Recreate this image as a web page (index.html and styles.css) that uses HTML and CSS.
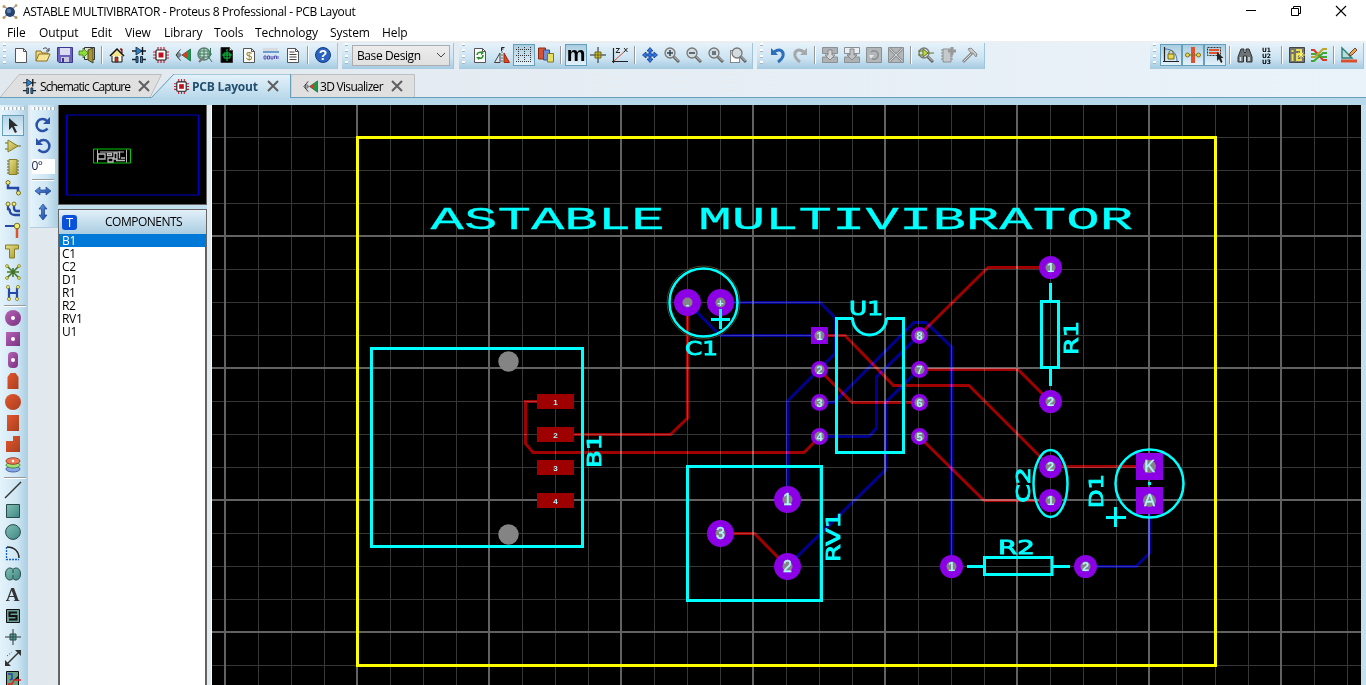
FILE: index.html
```html
<!DOCTYPE html>
<html lang="en">
<head>
<meta charset="utf-8">
<title>ASTABLE MULTIVIBRATOR - Proteus 8 Professional - PCB Layout</title>
<link rel="stylesheet" href="styles.css">
</head>
<body>
<svg class="defs" width="0" height="0">
  <defs>
    <linearGradient id="gold" x2="1" y2="1"><stop stop-color="#e6e08a"/><stop offset="1" stop-color="#a99a2c"/></linearGradient>
    <linearGradient id="violet" x2="1" y2="1"><stop stop-color="#b566b5"/><stop offset="1" stop-color="#7c2f80"/></linearGradient>
    <linearGradient id="rust" x2="1" y2="1"><stop stop-color="#e5572c"/><stop offset="1" stop-color="#a83f20"/></linearGradient>
    <linearGradient id="teal" x2="1" y2="1"><stop stop-color="#7fc0b8"/><stop offset="1" stop-color="#3f8680"/></linearGradient>
    <linearGradient id="blue" x2="1" y2="1"><stop stop-color="#6f9fe4"/><stop offset="1" stop-color="#12409a"/></linearGradient>
    <pattern id="minor" x="225" y="137" width="33" height="33" patternUnits="userSpaceOnUse"><path class="minor" d="M.5 0V33M0 .5H33"/></pattern>
    <symbol id="chip" viewBox="0 0 16 16"><path d="M5 0v16M8 0v16M11 0v16M0 5h16M0 8h16M0 11h16" stroke="#d02030" stroke-width="1.2"/><rect x="3" y="3" width="10" height="10" rx="1" fill="#fff" stroke="#222" stroke-width="1.2"/><rect x="5.500" y="5.500" width="5" height="5" fill="#c01020"/></symbol>
    <symbol id="schem" viewBox="0 0 16 16"><path d="M1 4h14M1 12.500h4M11 12.500h4" stroke="#222" fill="none" stroke-width="1.3"/><path d="M5 0v8l6-4z" fill="#2a86c8" stroke="#123" stroke-width=".8"/><path d="M11.500 0v8" stroke="#111" stroke-width="1.4"/><path d="M5 9.500h2v6H5zM9.500 9.500h2v6h-2z" fill="#2a86c8" stroke="#123" stroke-width=".9"/></symbol>
    <symbol id="vis" viewBox="0 0 16 16"><path d="M5.500 2.500L1 8l4.500 5.500M3 5.500v5" stroke="#333" fill="none"/><path d="M4 5l3 3-3 3z" fill="#789"/><path d="M15.500 2v12L7 8z" fill="#14a04a" stroke="#0a5a2c" stroke-width=".7"/><path d="M10 6l2-1.500v6.500L7 8z" fill="#d83a28"/></symbol>
    <symbol id="lens" viewBox="0 0 16 16"><path d="M9.500 9.500L15 15" stroke="#666" stroke-width="3"/><path d="M9.500 9L14.500 14" stroke="#ccc" stroke-width="1"/><circle cx="6" cy="6" r="5" fill="#d3dde0" stroke="#777" stroke-width="1.3"/></symbol>
    <symbol id="page" viewBox="0 0 16 16"><path d="M2.500 1.500h8l3 3v11h-11z" fill="#fcfcfc" stroke="#555"/><path d="M10.500 1.500v3h3" fill="none" stroke="#555"/></symbol>
    <symbol id="x" viewBox="0 0 12 12"><path d="M1 1l10 10M11 1L1 11" stroke="#5f5f5f" stroke-width="2"/></symbol>
    <symbol id="layer" viewBox="0 0 16 16"><path d="M.5.500h15v6H.5zM.5 10h15v5.500H.5z" fill="#aeb2b4" stroke="#8c9092"/><path d="M6 3h4v5h3l-5 5-5-5h3z" fill="#d4d6d7" stroke="#85898b"/></symbol>
  </defs>
</svg>

<header class="titlebar">
  <svg class="logo" viewBox="0 0 16 16"><path d="M1 2l5 3M15 1l-5 4M1 14l5-4M15 14l-5-3" stroke="#999" stroke-width="1.2"/><circle cx="8" cy="8" r="5" fill="#27426f"/><circle cx="7" cy="7" r="2.300" fill="#5b7fae"/><g fill="#b79b60"><circle cx="2" cy="2.500" r="1.500"/><circle cx="14" cy="1.500" r="1.300"/><circle cx="2" cy="13.500" r="1.500"/><circle cx="14" cy="13.500" r="1.500"/></g></svg>
  <span class="title">ASTABLE MULTIVIBRATOR - Proteus 8 Professional - PCB Layout</span>
  <span class="winbtns">
    <svg viewBox="0 0 12 12"><path d="M1 5.500h10" stroke="#000"/></svg>
    <svg viewBox="0 0 12 12"><path d="M1.500 3.500h7v7h-7zM3.500 3V1.500h7v7H9" fill="none" stroke="#000"/></svg>
    <svg viewBox="0 0 12 12"><path d="M1 1l10 10M11 1L1 11" stroke="#000" stroke-width="1.100"/></svg>
  </span>
</header>

<nav class="menu"><span>File</span><span>Output</span><span>Edit</span><span>View</span><span>Library</span><span>Tools</span><span>Technology</span><span>System</span><span>Help</span></nav>

<div class="toolbars">
  <div class="bar bar-file">
    <i class="grip"></i>
    <b><svg><use href="#page"/></svg></b>
    <b><svg viewBox="0 0 16 16"><path d="M1 14V4h5l1 2h6v2" fill="#f0d67c" stroke="#8a7020"/><path d="M1 14l3-7h11l-3 7z" fill="#f7e596" stroke="#8a7020"/><path d="M8 2c2-2 4-1 5 1M14 1v3h-3" fill="none" stroke="#333"/></svg></b>
    <b><svg viewBox="0 0 16 16"><path d="M.5.500h15v15H2l-1.500-1.500z" fill="#6b62c0" stroke="#3d3690"/><path d="M3 1h10v7H3z" fill="#dcdcf0"/><path d="M4 10h8v5H4z" fill="#c9c9d8"/><path d="M5 11h2v4H5z" fill="#3d3690"/></svg></b>
    <b><svg viewBox="0 0 16 16"><path d="M5.500.500h10v12h-10z" fill="#dfe3c8" stroke="#333"/><path d="M9 3l5-2v15l-5-3z" fill="#a99630" stroke="#443"/><path d="M0 4h4V1l5 5-5 5V8H0z" fill="#8edb3a" stroke="#3a7a18" stroke-width=".8"/></svg></b>
    <u></u>
    <b><svg viewBox="0 0 16 16"><path d="M11 2h2v4" fill="#d33" stroke="#600"/><path d="M3 8v7h10V8" fill="#fffbe0" stroke="#111"/><path d="M1 9l7-7 7 7" fill="#f4e58c" stroke="#111" stroke-width="1.500"/><path d="M6 10h3v5H6z" fill="#c33" stroke="#222" stroke-width=".7"/></svg></b>
    <b><svg><use href="#schem"/></svg></b>
    <b><svg><use href="#chip"/></svg></b>
    <b><svg><use href="#vis"/></svg></b>
    <b><svg viewBox="0 0 16 16"><circle cx="7" cy="7" r="6" fill="#c8dcd4" stroke="#5a8070" stroke-width="1.500"/><path d="M1 7h14M7 1v12M3 4h8v6H3zM11 9l4 6M13.500 1v8" stroke="#3c7a60" fill="none"/><path d="M2 15l5-5" stroke="#777" stroke-width="2"/></svg></b>
    <b><svg viewBox="0 0 16 16"><path d="M2 .5h8.500l3 3v12H2z" fill="#000" stroke="#333"/><path d="M5 6h6v5H5zM8 2v12M3 8h10" fill="none" stroke="#11cc44"/><path d="M10.500.500v3h3" fill="#fff" stroke="#333" stroke-width=".7"/></svg></b>
    <b><svg viewBox="0 0 16 16"><use href="#page"/><text x="8" y="13" class="dollar">$</text></svg></b>
    <b><svg viewBox="0 0 16 16"><path d="M0 1h15v4H0z" fill="#d8dce0"/><path d="M0 5h16" stroke="#4d86c4" stroke-width="1.500"/><path d="M1 9h2v3H1zM4.500 9h2v3h-2zM8 9v3h2V9M11.500 12V9h2v3M15 9v3" fill="none" stroke="#5a52b4"/></svg></b>
    <b><svg viewBox="0 0 16 16"><use href="#page"/><path d="M4.500 5h5M4.500 7.500h7M4.500 10h7M4.500 12.500h7" stroke="#444"/></svg></b>
    <u></u>
    <b><svg viewBox="0 0 16 16"><circle cx="8" cy="8" r="7.500" fill="#2b62c0" stroke="#173c86"/><text x="8" y="13" class="q">?</text></svg></b>
  </div>
  <div class="bar bar-select">
    <i class="grip"></i>
    <div class="combo"><span>Base Design</span><svg viewBox="0 0 10 10"><path d="M1 3l4 4 4-4" fill="none" stroke="#444"/></svg></div>
  </div>
  <div class="bar bar-view">
    <i class="grip"></i>
    <b><svg viewBox="0 0 16 16"><use href="#page"/><path d="M5 8c0-3 4-3 5-2M11 8c0 4-4 4-5 2" fill="none" stroke="#289028" stroke-width="1.500"/><path d="M9 4l3 2-3 2zM7 13l-3-3h4z" fill="#289028"/></svg></b>
    <b><svg viewBox="0 0 16 16"><path d="M.5 15.500h5.500V6z" fill="#dfe7ec" stroke="#444"/><path d="M10 6v9.500h5.500z" fill="#d94a26" stroke="#a02808"/><path d="M8 4v12" stroke="#666" stroke-dasharray="2 1"/><path d="M7.500 4V.5h3M7 2h2.500" fill="none" stroke="#222"/></svg></b>
    <b class="on"><svg viewBox="0 0 16 16"><path d="M2.500 0v16M8.500 0v16M14.500 0v16M0 2.500h16M0 8.500h16M0 14.500h16" stroke="#333" stroke-dasharray="1 1"/></svg></b>
    <b><svg viewBox="0 0 16 16"><path d="M.5 1h7v11h-7z" fill="#d65434" stroke="#8a2b14"/><path d="M5.500 3h6v10h-6z" fill="#6d8fd8" stroke="#34508f"/><path d="M9.500 6.500h6V15h-6z" fill="#e8df68" stroke="#7f7620"/></svg></b>
    <u></u>
    <b class="on"><svg viewBox="0 0 16 16"><text x="8" y="14" class="m">m</text></svg></b>
    <b><svg viewBox="0 0 16 16"><path d="M8 0v16M0 8h16" stroke="#222"/><path d="M5 5h6v6H5z" fill="#c8bd38" stroke="#6d6516"/><path d="M8 5v6M5 8h6" stroke="#6d6516"/></svg></b>
    <b><svg viewBox="0 0 16 16"><path d="M1.500 1v15M0 14.500h16" stroke="#222" stroke-width="1.200"/><path d="M2 14L13 4" stroke="#d84a28"/><path d="M4 1.500h3.500l-3.500 4h4M12 1l3.500 4M15.500 1L12 5" fill="none" stroke="#222"/></svg></b>
    <u></u>
    <b><svg viewBox="0 0 16 16"><path d="M8 .5l3 3.500H9v3h3V5l3.500 3-3.500 3V9H9v3h2l-3 3.500L5 12h2V9H4v2L.5 8 4 5v2h3V4H5z" fill="#2f78e0" stroke="#12398a" stroke-width=".8"/></svg></b>
    <b><svg viewBox="0 0 16 16"><use href="#lens"/><path d="M3 6h6M6 3v6" stroke="#345" stroke-width="1.500"/></svg></b>
    <b><svg viewBox="0 0 16 16"><use href="#lens"/><path d="M3 6h6" stroke="#345" stroke-width="1.500"/></svg></b>
    <b><svg viewBox="0 0 16 16"><use href="#lens"/><path d="M4 4h4v4H4z" fill="#678"/></svg></b>
    <b><svg viewBox="0 0 16 16"><path d="M.5 3.500h9v12h-9z" fill="#fff" stroke="#222" stroke-dasharray="1 1"/><use href="#lens" x="1"/></svg></b>
  </div>
  <div class="bar bar-edit">
    <i class="grip"></i>
    <b><svg viewBox="0 0 16 16"><path d="M4 5c6-4 10-1 9 4-.5 2-2 4-5 6" fill="none" stroke="#2d6fb8" stroke-width="3"/><path d="M1 1v7h7z" fill="#2d6fb8"/></svg></b>
    <b><svg viewBox="0 0 16 16"><path d="M12 5C6 1 2 4 3 9c.5 2 2 4 5 6" fill="none" stroke="#a5a8aa" stroke-width="3"/><path d="M15 1v7H8z" fill="#a5a8aa"/></svg></b>
    <u></u>
    <b><svg><use href="#layer"/></svg></b>
    <b><svg viewBox="0 0 16 16"><use href="#layer"/><path d="M1 1h14v5H1z" fill="#e8eef2"/><path d="M6 2h4v6h3l-5 5-5-5h3z" fill="#c0c3c5" stroke="#85898b"/></svg></b>
    <b><svg viewBox="0 0 16 16"><path d="M.5.500h15v15H.5z" fill="#b4b7b9" stroke="#8c9092"/><path d="M5 5c4-3 8 0 7 4s-5 4-7 2" fill="none" stroke="#8c9092" stroke-width="1.500"/><path d="M3 8h5l-3 4z" fill="#e3e5e6"/></svg></b>
    <b><svg viewBox="0 0 16 16"><path d="M.5.500h15v15H.5z" fill="#b4b7b9" stroke="#8c9092"/><path d="M2 2l12 12M14 2L2 14" stroke="#8c9092" stroke-width="2.500"/><path d="M2 2l12 12M14 2L2 14" stroke="#d3d5d6"/></svg></b>
    <u></u>
    <b><svg viewBox="0 0 16 16"><use href="#lens"/><path d="M5 2v8l5-4zM0 4h5M0 8h5M10 6h6" fill="#c8d84a" stroke="#5b7822"/></svg></b>
    <b><svg viewBox="0 0 16 16"><path d="M3 2h8v13H3z" fill="#c6c9cb" stroke="#8c9092"/><path d="M1 3h2M1 6h2M1 9h2M1 12h2M11 9h2M11 12h2" stroke="#888"/><path d="M12 0v8M8 4h8" stroke="#999" stroke-width="3"/></svg></b>
    <b><svg viewBox="0 0 16 16"><path d="M1 15l9-9" stroke="#888" stroke-width="3"/><path d="M1.500 14.500l8-8" stroke="#ddd"/><path d="M6 2l3-1 6 6-1 3-3-4-2 0z" fill="#ccc" stroke="#888"/></svg></b>
  </div>
  <div class="bar bar-right">
    <i class="grip"></i>
    <b class="on"><svg viewBox="0 0 16 16"><path d="M1.500 0v15M0 14.500h16" stroke="#222" stroke-width="1.200"/><path d="M2 2c8 0 12 5 12 12" fill="none" stroke="#4872b0"/><path d="M6 7V5c1-2 3-2 4 0v2" fill="none" stroke="#7b6b18"/><path d="M5 7h6v5H5z" fill="#e8d850" stroke="#7b6b18"/></svg></b>
    <b class="on"><svg viewBox="0 0 16 16"><path d="M6 0h4v16H6z" fill="#e0522c"/><path d="M2 8h12" stroke="#7b7020"/><circle cx="2.500" cy="8" r="2" fill="#e8d850" stroke="#7b7020"/><circle cx="13.500" cy="8" r="2" fill="#e8d850" stroke="#7b7020"/></svg></b>
    <b class="on"><svg viewBox="0 0 16 16"><path d="M.5.500h13v8H.5z" fill="none" stroke="#333" stroke-dasharray="2 1"/><path d="M2 3h10M2 6h10" stroke="#e0522c" stroke-width="2"/><path d="M10 5v9l2-2 2 4 1.500-1-1.500-4h2.500z" fill="#222"/></svg></b>
    <u></u>
    <b><svg viewBox="0 0 16 16"><path d="M4 2h3v3l1 1 1-1V2h3l3 8v5H9.500V9h-3v6H1v-5z" fill="#6d7478" stroke="#333"/><path d="M3.500 10v4M12 10v4" stroke="#e0e4e6" stroke-width="1.500"/></svg></b>
    <b><svg viewBox="0 0 16 16"><text x="3" y="4.500" class="uu">U1</text><text x="3" y="10.500" class="uu">U2</text><text x="3" y="16.500" class="uu">U3</text></svg></b>
    <u></u>
    <b><svg viewBox="0 0 16 16"><path d="M.5.500h15v15H.5z" fill="#74756a" stroke="#444"/><path d="M3.500 3v2M3.500 7v7M7 3h5v4H8v6h5" fill="none" stroke="#e8df58" stroke-width="2"/><path d="M12 4v8M8 8h8M9.500 5.500l5 5M14.500 5.500l-5 5" stroke="#fff36a"/></svg></b>
    <b><svg viewBox="0 0 16 16"><path d="M0 3h3l9 10h4" fill="none" stroke="#d8392b" stroke-width="2.200"/><path d="M0 7h4l8 3h4M0 14h3L12 6h4" fill="none" stroke="#3ea832" stroke-width="2"/><path d="M0 10h4l8-8h4" fill="none" stroke="#b9a62c" stroke-width="2"/></svg></b>
    <u></u>
    <b><svg viewBox="0 0 16 16"><path d="M1 1v10h10z" fill="#b9ded8" stroke="#2f7f78" stroke-width="1.400"/><path d="M8 9l1-3 5-5 2 2-5 5z" fill="#e8a848" stroke="#744"/><path d="M0 12.500h16v3H0z" fill="#d9512c"/></svg></b>
  </div>
</div>

<div class="tabs">
  <svg class="tabshapes" viewBox="0 0 1366 31" width="1366" height="31"><path d="M0 23.500L19 .5H161.500L150 23.500z" fill="#e0e0e0" stroke="#bcbfc2"/><path d="M291 .5h123.500v23H291z" fill="#e0e0e0" stroke="#bcbfc2"/><path d="M0 23.500H151.500L174 -.5H290.500V23.500H1366V31H0z" fill="#b7d8ea"/><path d="M152 24L174.500 0H290V25H152z" fill="url(#tabfill)"/><path d="M0 23.500H151.500L174 0H290.500V23.500H1366" fill="none" stroke="#679fbb"/><defs><linearGradient id="tabfill" x2="0" y2="1"><stop stop-color="#e6f2fa"/><stop offset="1" stop-color="#b7d8ea"/></linearGradient></defs></svg>
  <div class="tab tab-a"><svg class="ti"><use href="#schem"/></svg><span>Schematic Capture</span><svg class="tx"><use href="#x"/></svg></div>
  <div class="tab tab-b"><svg class="ti"><use href="#chip"/></svg><span>PCB Layout</span><svg class="tx"><use href="#x"/></svg></div>
  <div class="tab tab-c"><svg class="ti"><use href="#vis"/></svg><span>3D Visualizer</span><svg class="tx"><use href="#x"/></svg></div>
</div>

<main class="work">
  <div class="tools">
    <i class="hgrip"></i>
    <b class="on"><svg viewBox="0 0 16 16"><path d="M4 1v12l3-3 3 6 2-1-3-6h4z" fill="#2c2c2c"/></svg></b>
    <b><svg viewBox="0 0 16 16"><path d="M0 5h3M0 11h3M12 8h4" stroke="#6d6820"/><path d="M3 2v12l10-6z" fill="url(#gold)" stroke="#857d28"/></svg></b>
    <b><svg viewBox="0 0 16 16"><path d="M2 2h12M2 5h12M2 8h12M2 11h12M2 14h12" stroke="#555"/><path d="M4 .5h8v15H4z" fill="url(#gold)" stroke="#857d28"/></svg></b>
    <b><svg viewBox="0 0 16 16"><path d="M3 3v5h10v5" fill="none" stroke="#2548a4" stroke-width="2.500"/><circle cx="3" cy="2.500" r="2" fill="#f3ec70" stroke="#77702a"/><circle cx="13.500" cy="13" r="2" fill="#f3ec70" stroke="#77702a"/></svg></b>
    <b><svg viewBox="0 0 16 16"><path d="M3 3v5q2 0 2 3 1 3 5 3h5M9 3v4q0 3 3 3h3" fill="none" stroke="#2548a4" stroke-width="2.300"/><circle cx="3" cy="3" r="2" fill="#f3ec70" stroke="#77702a"/><circle cx="9" cy="3" r="2" fill="#f3ec70" stroke="#77702a"/></svg></b>
    <b><svg viewBox="0 0 16 16"><path d="M0 4h10" stroke="#2548a4" stroke-width="2"/><path d="M12 6v10" stroke="#e0522c" stroke-width="2.500"/><circle cx="12" cy="4" r="2.800" fill="#f3ec70" stroke="#77702a"/></svg></b>
    <b><svg viewBox="0 0 16 16"><path d="M.5 2h13v4h-4v9h-5V6h-4z" fill="url(#gold)" stroke="#857d28"/></svg></b>
    <b><svg viewBox="0 0 16 16"><path d="M2 2l12 12M14 2L2 14M8 4v9M2 8h12" stroke="#457428" stroke-width="1.600"/><g fill="#e8df48" stroke="#77702a" stroke-width=".6"><circle cx="2" cy="2" r="1.500"/><circle cx="14" cy="2" r="1.500"/><circle cx="2" cy="14" r="1.500"/><circle cx="14" cy="14" r="1.500"/></g></svg></b>
    <b><svg viewBox="0 0 16 16"><path d="M4 3v10M12 3v10M4 8h8" fill="none" stroke="#2548a4" stroke-width="2.200"/><g fill="#f3ec70" stroke="#77702a" stroke-width=".7"><circle cx="3" cy="2" r="1.600"/><circle cx="13" cy="2" r="1.600"/><circle cx="4" cy="14" r="1.600"/><circle cx="12" cy="14" r="1.600"/></g></svg></b>
    <u></u>
    <b><svg viewBox="0 0 16 16"><circle cx="8" cy="8" r="8" fill="url(#violet)"/><circle cx="8" cy="8" r="2" fill="#fff"/></svg></b>
    <b><svg viewBox="0 0 16 16"><path d="M1 1h14v14H1z" fill="url(#violet)"/><circle cx="8" cy="8" r="2" fill="#fff"/></svg></b>
    <b><svg viewBox="0 0 16 16"><rect x="3" width="10" height="16" rx="4" fill="url(#violet)"/><circle cx="8" cy="8" r="2" fill="#fff"/></svg></b>
    <b><svg viewBox="0 0 16 16"><path d="M2.500 16V4l3-4h5l3 4v12z" fill="url(#rust)"/></svg></b>
    <b><svg viewBox="0 0 16 16"><circle cx="8" cy="8" r="8" fill="url(#rust)"/></svg></b>
    <b><svg viewBox="0 0 16 16"><path d="M2 0h12v16H2z" fill="url(#rust)"/></svg></b>
    <b><svg viewBox="0 0 16 16"><path d="M1 16V5h7V0h7v16z" fill="url(#rust)"/></svg></b>
    <b><svg viewBox="0 0 16 16"><g stroke-width=".8"><ellipse cx="8" cy="12" rx="7" ry="3" fill="#88a8ea" stroke="#2c4c90"/><ellipse cx="8" cy="8" rx="7" ry="3" fill="#9ee078" stroke="#3d7c28"/><ellipse cx="8" cy="4" rx="7" ry="3.300" fill="#f07a58" stroke="#8a2b14"/></g><circle cx="8" cy="4" r="1.200" fill="#fff"/></svg></b>
    <u></u>
    <b><svg viewBox="0 0 16 16"><path d="M0 16L16 0" stroke="#333" stroke-width="1.500"/></svg></b>
    <b><svg viewBox="0 0 16 16"><path d="M1.500 1.500h13v13h-13z" fill="url(#teal)" stroke="#2a4a48"/></svg></b>
    <b><svg viewBox="0 0 16 16"><circle cx="8" cy="8" r="7.400" fill="url(#teal)" stroke="#2a4a48"/></svg></b>
    <b><svg viewBox="0 0 16 16"><path d="M1.500 2v12.500H14" fill="none" stroke="#1560c8" stroke-dasharray="2 1" stroke-width="1.300"/><path d="M2 2c8 0 12 5 12 11" fill="none" stroke="#222" stroke-width="1.300"/></svg></b>
    <b><svg viewBox="0 0 16 16"><path d="M8 3.500C10.500.500 15.500 2 15.500 8S10.500 15.500 8 12.500C5.500 15.500.5 14 .5 8S5.500.500 8 3.500z" fill="url(#teal)" stroke="#2a4a48"/><path d="M8 4v3M8 9v3" stroke="#2a4a48"/></svg></b>
    <b><svg viewBox="0 0 16 16"><text x="7.500" y="14" class="serif-a">A</text></svg></b>
    <b><svg viewBox="0 0 16 16"><path d="M1.500 1.500h13v13h-13z" fill="#68a096" stroke="#111"/><path d="M12 4.500H4.500V8h7v3.500H4" fill="none" stroke="#111" stroke-width="2"/></svg></b>
    <b><svg viewBox="0 0 16 16"><path d="M8 0v16M0 8h16" stroke="#333"/><path d="M5 5h6v6H5z" fill="#5b9f9a" stroke="#2a4a48"/><path d="M8 5v6M5 8h6" stroke="#2a4a48"/></svg></b>
    <b><svg viewBox="0 0 16 16"><path d="M2 14L14 2" stroke="#333" stroke-width="1.500"/><path d="M0 10v6h6zM10 0h6v6z" fill="#333"/><path d="M2 6l5-4" stroke="#333" stroke-dasharray="1 2"/></svg></b>
    <b><svg viewBox="0 0 16 16"><path d="M1.500.500h12v16h-12z" fill="#68a07c" stroke="#111"/><path d="M3 3h4v5l-2 1" fill="none" stroke="#1c44b0" stroke-width="1.500"/><path d="M3 13h4l2-4h7" fill="none" stroke="#e02020" stroke-width="1.500"/><path d="M9 9l5-5v3" fill="#111"/></svg></b>
  </div>
  <div class="rotate">
    <i class="hgrip"></i>
    <b><svg viewBox="0 0 16 16"><path d="M12.500 11.500A6 6 0 1 1 12 4" fill="none" stroke="#2a52a8" stroke-width="2.500"/><path d="M15 0v7H8z" fill="#2a52a8"/></svg></b>
    <b><svg viewBox="0 0 16 16"><path d="M3.500 11.500A6 6 0 1 0 4 4" fill="none" stroke="#2a52a8" stroke-width="2.500"/><path d="M1 0v7h7z" fill="#2a52a8"/></svg></b>
    <div class="angle">0°</div>
    <u></u>
    <b><svg viewBox="0 0 16 16"><path d="M0 8l5-4v3h6V4l5 4-5 4V9.500H5V12z" fill="url(#blue)" stroke="#1d4292" stroke-width=".7"/></svg></b>
    <b><svg viewBox="0 0 16 16"><path d="M8 0l4 5H9.500v6H12l-4 5-4-5h2.500V5H4z" fill="url(#blue)" stroke="#1d4292" stroke-width=".7"/></svg></b>
  </div>
  <aside class="side">
    <svg class="preview" viewBox="59 105 147 98" width="147" height="98">
      <path d="M66.500 114.500h132v80h-132z" fill="none" stroke="#0000c8"/>
      <path d="M93.500 148.500h37v14h-37z" fill="none" stroke="#00c800"/>
      <path d="M97.500 149v13M126.500 149v13M100 151.500h24" stroke="#bbb" fill="none"/><path d="M98 153.500h7v5h-7zM107.500 153h4v2h-4zM108 157.500h5v4h-5zM114 152.500h3v6h-3zM119.500 151v7M116 160h9M121 157.500h4" fill="none" stroke="#bbb" stroke-width="1.300"/>
    </svg>
    <div class="list">
      <div class="list-head"><em>T</em><span>COMPONENTS</span></div>
      <ul><li class="sel">B1</li><li>C1</li><li>C2</li><li>D1</li><li>R1</li><li>R2</li><li>RV1</li><li>U1</li></ul>
    </div>
  </aside>
  <section class="canvas">
    <svg viewBox="212 105 1149 580" width="1149" height="580">
      <rect x="212" y="105" width="1149" height="580" fill="#000"/>
      <rect x="212" y="105" width="1149" height="580" fill="url(#minor)"/>
      <path class="major" d="M225 105V685M357 105V685M489 105V685M621 105V685M753 105V685M885 105V685M1017 105V685M1149 105V685M1281 105V685M212 236H1361M212 368H1361M212 500H1361M212 632H1361"/>
      <g class="back">
        <path d="M687.500 302.500L720 335.500H819M720 302.500H820L835.500 318V353L787.500 401V500M819 402.500H834L914 322.500H926L951.500 347V566M819 436.500H869L876.500 428V377L919 335.500M919 369.500L885.500 402.500V470L787 566.500M1149.500 500V553L1136 566.500H1085"/>
      </g>
      <g class="front">
        <path d="M540 401.500H525.500V443.500L533 452.500H804L819.500 437M574 434.500H670.500L687.500 418V303M919 335.500L988 267.500H1050M919 369.500H1018L1050 401.500M819 335.500H845L893.500 385.500H969L1050 466.500H1149M819 369.500L852 402.500H919M919 436.500L984 500.500H1050M720 533.500H754.500L787 566.500"/>
      </g>
      <g fill="#9e0000"><path d="M537 394h37v15h-37zM537 427h37v15h-37zM537 460h37v15h-37zM537 493h37v15h-37z"/></g>
      <g fill="#848484"><circle cx="508.500" cy="361.500" r="10.200"/><circle cx="508.500" cy="534.500" r="10.200"/></g>
      <circle cx="703.500" cy="302.500" r="36.500" fill="none" stroke="#4a4020"/>
      <g class="pads">
        <circle cx="687.500" cy="302.500" r="13.500"/><circle cx="720.500" cy="302.500" r="13.500"/>
        <circle cx="787.500" cy="499.500" r="13.500"/><circle cx="720.500" cy="533.500" r="13.500"/><circle cx="787.500" cy="566.500" r="13.500"/>
        <path d="M811 327h17v17h-17z"/>
        <circle cx="819.500" cy="369.500" r="8.500"/><circle cx="819.500" cy="402.500" r="8.500"/><circle cx="819.500" cy="436.500" r="8.500"/>
        <circle cx="919.500" cy="335.500" r="8.500"/><circle cx="919.500" cy="369.500" r="8.500"/><circle cx="919.500" cy="402.500" r="8.500"/><circle cx="919.500" cy="436.500" r="8.500"/>
        <circle cx="1050.500" cy="267.500" r="11.500"/><circle cx="1050.500" cy="401.500" r="11.500"/><circle cx="1050.500" cy="466.500" r="11.500"/><circle cx="1050.500" cy="500.500" r="11.500"/>
        <circle cx="951.500" cy="566.500" r="11.500"/><circle cx="1085.500" cy="566.500" r="11.500"/>
        <path d="M1136 453h27v27h-27zM1136 487h27v27h-27z"/>
      </g>
      <g class="holes">
        <circle cx="687.500" cy="302.500" r="5"/><circle cx="720.500" cy="302.500" r="5"/><circle cx="787.500" cy="499.500" r="5"/><circle cx="720.500" cy="533.500" r="5"/><circle cx="787.500" cy="566.500" r="5"/>
        <circle cx="819.500" cy="335.500" r="5"/><circle cx="819.500" cy="369.500" r="5"/><circle cx="819.500" cy="402.500" r="5"/><circle cx="819.500" cy="436.500" r="5"/>
        <circle cx="919.500" cy="335.500" r="5"/><circle cx="919.500" cy="369.500" r="5"/><circle cx="919.500" cy="402.500" r="5"/><circle cx="919.500" cy="436.500" r="5"/>
        <circle cx="1050.500" cy="267.500" r="5"/><circle cx="1050.500" cy="401.500" r="5"/><circle cx="1050.500" cy="466.500" r="5"/><circle cx="1050.500" cy="500.500" r="5"/>
        <circle cx="951.500" cy="566.500" r="5"/><circle cx="1085.500" cy="566.500" r="5"/><circle cx="1149.500" cy="466.500" r="6.500"/><circle cx="1149.500" cy="500.500" r="6.500"/>
      </g>
      <g class="silk">
        <path d="M371.500 348.500h211v198h-211zM687.500 466.500h134v134h-134zM852.500 318.500H836.500V452.500H903.500V318.500H886.500M852.500 318A17 17 0 0 0 886.500 318M852 318.500h1M1050.500 283V301.500M1041.500 301.500h17v66h-17zM1050.500 367.500V386M967 566.500H984M984.500 557.500h67.500v17h-67.500zM1052 566.500H1070M711 319.500H730M720.500 309V329M1106 517.500H1126M1115.500 507V527M1148 483.500h3"/>
        <circle cx="703.500" cy="302.500" r="34"/><circle cx="1149.500" cy="483.500" r="34"/><ellipse cx="1050.500" cy="483.500" rx="17" ry="33.500"/>
      </g>
      <path d="M357.500 137.500H1215.500V665.500H357.500z" fill="none" stroke="#ff0" stroke-width="3"/>
      <text class="board-title" transform="translate(430.500 228.500) scale(1.743 1)">ASTABLE MULTIVIBRATOR</text>
      <g class="refs">
        <text x="685" y="355" textLength="33" lengthAdjust="spacingAndGlyphs">C1</text>
        <text x="849" y="315" textLength="34" lengthAdjust="spacingAndGlyphs">U1</text>
        <text x="998" y="554" textLength="37" lengthAdjust="spacingAndGlyphs">R2</text>
        <text transform="translate(601 468) rotate(-90)" textLength="34" lengthAdjust="spacingAndGlyphs">B1</text>
        <text transform="translate(840 562) rotate(-90)" textLength="50" lengthAdjust="spacingAndGlyphs">RV1</text>
        <text transform="translate(1078 355) rotate(-90)" textLength="34" lengthAdjust="spacingAndGlyphs">R1</text>
        <text transform="translate(1030 503) rotate(-90)" textLength="36" lengthAdjust="spacingAndGlyphs">C2</text>
        <text transform="translate(1103 508) rotate(-90)" textLength="34" lengthAdjust="spacingAndGlyphs">D1</text>
      </g>
      <g class="pins pin-s"><text x="555.500" y="405">1</text><text x="555.500" y="438">2</text><text x="555.500" y="471">3</text><text x="555.500" y="504">4</text></g>
      <g class="pins pin-m"><text x="819.500" y="339.500">1</text><text x="819.500" y="373.500">2</text><text x="819.500" y="406.500">3</text><text x="819.500" y="440.500">4</text><text x="919.500" y="339.500">8</text><text x="919.500" y="373.500">7</text><text x="919.500" y="406.500">6</text><text x="919.500" y="440.500">5</text></g>
      <g class="pins pin-l"><text x="1050.500" y="272">1</text><text x="1050.500" y="406">2</text><text x="1050.500" y="471">2</text><text x="1050.500" y="505">1</text><text x="951.500" y="571">1</text><text x="1085.500" y="571">2</text></g>
      <g class="pins pin-xl"><text x="787.500" y="505">1</text><text x="720.500" y="539">3</text><text x="787.500" y="572">2</text><text x="1149.500" y="472">K</text><text x="1149.500" y="506">A</text></g>
      <g class="pins pin-m"><text x="687.500" y="307.500">-</text><text x="720.500" y="306.500">+</text></g>
    </svg>
  </section>
</main>
</body>
</html>
```

FILE: styles.css
```css
* { box-sizing: border-box; }
body { margin: 0; width: 1366px; height: 685px; overflow: hidden; display: flex; flex-direction: column; background: linear-gradient(90deg, #e1e9ef, #ebf3fa); font-family: "Open Sans", "Noto Sans", sans-serif; font-size: 12px; color: #000; }
b, i, u, em { font-weight: normal; font-style: normal; text-decoration: none; }
svg { display: block; }
.defs { position: absolute; }

.titlebar { flex: none; height: 23px; background: #fff; display: flex; align-items: center; padding-left: 2px; }
.logo { width: 16px; height: 16px; margin-right: 5px; }
.title { letter-spacing: -0.36px; white-space: nowrap; }
.winbtns { margin: -2px 19px 0 auto; display: flex; gap: 33px; }
.winbtns svg { width: 12px; height: 12px; }
.menu { flex: none; height: 18px; background: #fff; display: grid; grid-template-columns: 32px 52px 34px 39px 50px 41px 75px 52px 40px; padding-left: 7px; line-height: 19px; letter-spacing: -.1px; }

.toolbars { flex: none; height: 33px; padding-top: 1px; display: flex; align-items: flex-start; border-top: 1px solid #efefef; }
.bar { height: 26px; padding-bottom: 2px; display: flex; align-items: center; border-right: 1px solid #9fc5da; background: linear-gradient(#e6f2fa, #cbe3f2 60%, #a5cae0); }
.bar-file { width: 338px; margin-right: 4px; }
.bar-select { width: 112px; margin-right: 5px; }
.bar-view { width: 294px; margin-right: 4px; }
.bar-edit { width: 228px; }
.bar-right { width: 214px; margin-left: auto; margin-right: 2px; }
.grip { width: 3px; height: 24px; margin: 0 4px 0 3px; background: repeating-linear-gradient(#fff 0 2px, #a5b7c2 2px 3px, transparent 3px 6px); }
.bar-view .grip, .bar-edit .grip, .bar-right .grip { margin-right: 4px; }
.bar b { flex: none; width: 22px; height: 22px; display: grid; place-items: center; }
.bar b svg { width: 16px; height: 16px; overflow: visible; }
.bar .on { background: linear-gradient(#a9cde0, #e2f1fa); border: 1px solid #679fbb; }
.bar u { flex: none; width: 2px; height: 18px; margin: 0 3px; background: linear-gradient(90deg, #999 50%, #fff 50%); }
.combo { width: 98px; height: 21px; border: 1px solid #acacac; background: linear-gradient(#ececec, #e0e0e0); display: flex; align-items: center; padding: 0 3px 0 4px; justify-content: space-between; letter-spacing: -.4px; }
.combo svg { width: 10px; height: 10px; }
.dollar { font: 11px "Liberation Sans", sans-serif; text-anchor: middle; fill: #8a7a18; }
.q { font: bold 14px "Liberation Sans", sans-serif; text-anchor: middle; fill: #fff; }
.m { font: bold 21px "Liberation Sans", sans-serif; text-anchor: middle; }
.uu { font: bold 6px "DejaVu Sans", sans-serif; }

.tabs { flex: none; height: 30px; position: relative; display: flex; }
.tabshapes { position: absolute; left: 0; top: 0; }
.tab { position: relative; height: 24px; display: flex; align-items: center; white-space: nowrap; letter-spacing: -.35px; }
.ti { flex: none; width: 15px; height: 15px; margin-right: 2px; }
.tx { width: 12px; height: 12px; margin-left: auto; }
.tab-a { margin-left: 22px; width: 128px; letter-spacing: -.95px; }
.tab-a span { font-size: 12px; word-spacing: 1px; }
.tab-b { margin-left: 24px; width: 105px; font-weight: bold; color: #23506f; letter-spacing: -.2px; }
.tab-c { margin-left: 24px; width: 100px; letter-spacing: -.7px; }
.tab-a .ti, .tab-b .ti { margin-right: 3px; }

.work { flex: none; height: 581px; display: flex; align-items: flex-start; }
.tools { width: 28px; height: 581px; overflow: hidden; display: flex; flex-direction: column; background: linear-gradient(90deg, #e4f3fb, #cfe6f3 60%, #a9cee2); padding-right: 2px; }
.hgrip { flex: none; height: 3px; margin: 3px 0 4.5px 2px; background: repeating-linear-gradient(90deg, #fff 0 2px, #a5b7c2 2px 3px, transparent 3px 4px); }
.tools b { flex: none; width: 22px; height: 21px; margin-left: 2px; display: grid; place-items: center; }
.tools b svg, .rotate b svg { width: 16px; height: 16px; overflow: visible; }
.tools .on { border: 1px solid #679fbb; background: linear-gradient(#b4d4e5, #e2f1fa); }
.tools u { flex: none; height: 2px; margin: 1px 0 1px 4px; background: linear-gradient(#999 50%, #fff 50%); }
.serif-a { font: bold 19px "Liberation Serif", serif; text-anchor: middle; fill: #333; }
.rotate { width: 28px; height: 124px; margin-left: 2px; display: flex; flex-direction: column; align-items: center; background: linear-gradient(90deg, #e4f3fb, #cfe6f3 60%, #a9cee2); border-bottom: 1px solid #b4cddd; padding-right: 2px; }
.rotate .hgrip { align-self: stretch; }
.rotate b { height: 21.500px; padding-top: 2px; }
.rotate u + b { margin-top: -1px; }
.angle { width: 23px; height: 15px; margin-top: 1px; background: #fff; line-height: 14px; letter-spacing: -.5px; color: #124; }
.rotate u { width: 22px; height: 2px; margin: 5px 0 1px; background: linear-gradient(#999 50%, #fff 50%); }

.side { width: 149px; height: 581px; display: flex; flex-direction: column; gap: 4px; background: #c4dfee; }
.preview { flex: none; width: 149px; height: 101px; background: #000; border: 1px solid #666; }
.list { flex: 1; border: 1px solid #666; border-bottom: 0; background: #fff; }
.list-head { height: 24px; display: flex; align-items: center; padding-left: 3px; background: linear-gradient(#e2f0f9, #aacde1); }
.list-head em { width: 15px; height: 15px; border-radius: 3px; background: #0a50d8; color: #fff; text-align: center; line-height: 15px; font-size: 13px; }
.list-head span { margin: -2px 0 0 28px; letter-spacing: -.5px; }
.list ul { list-style: none; margin: 0; padding: 0; height: 460px; border-left: 1px solid #0078d7; border-right: 1px solid #0078d7; }
.list li { height: 13px; line-height: 13px; padding-left: 2px; letter-spacing: -.3px; }
.list .sel { background: #0078d7; color: #fff; }

.canvas { flex: 1; height: 581px; margin-left: 4px; padding-right: 5px; background: linear-gradient(90deg, #fff 1px, #c4dfee 1px); border-top: 1px solid #666; }
.canvas svg { margin-left: 1px; }
.minor { stroke: #363636; fill: none; }
.major { stroke: #626262; stroke-width: 2; fill: none; }
.back, .front { mix-blend-mode: screen; fill: none; stroke-width: 3; }
.back { stroke: #000090; }
.front { stroke: #a00000; }
.pads { fill: #8c00e6; }
.holes { fill: #848484; }
.silk { fill: none; stroke: #0ff; stroke-width: 3; }
.silk circle, .silk ellipse { stroke-width: 2.500; }
.board-title { font: 32px "Liberation Mono", monospace; fill: #0ff; stroke: #0ff; stroke-width: .25; }
.refs { font: 20px "DejaVu Sans", sans-serif; fill: #0ff; stroke: #0ff; stroke-width: .9; }
.pins { fill: #b0f4ff; text-anchor: middle; }
.pin-s { font: bold 8px "Liberation Sans", sans-serif; }
.pin-m { font: bold 11px "Liberation Sans", sans-serif; }
.pin-l { font: bold 13px "Liberation Sans", sans-serif; }
.pin-xl { font: 16px "Liberation Sans", sans-serif; stroke: #b0f4ff; stroke-width: .4; }
```
